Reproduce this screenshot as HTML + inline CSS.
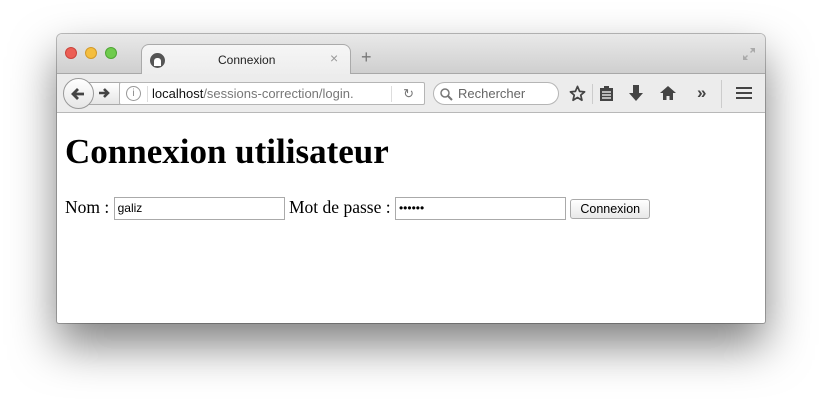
<!DOCTYPE html>
<html><head><meta charset="utf-8"><style>
*{margin:0;padding:0;box-sizing:border-box}
body{width:822px;height:402px;background:#fff;position:relative;overflow:hidden;font-family:"Liberation Sans",sans-serif}
.win{position:absolute;left:57px;top:34px;width:708px;height:289px;border-radius:5px 5px 2px 2px;box-shadow:0 22px 45px rgba(0,0,0,.5),0 0 0 1px rgba(0,0,0,.25);background:#fff;overflow:hidden}
.title{position:absolute;left:0;top:0;width:708px;height:40px;background:linear-gradient(#e9e9e9,#cfcfcf);border-bottom:1px solid #a8a8a8}
.dot{position:absolute;top:13px;width:12px;height:12px;border-radius:50%}
.tab{position:absolute;left:84px;top:10px;width:210px;height:31px;background:linear-gradient(#f6f6f6,#ededed);border:1px solid #aaa;border-bottom:none;border-radius:8px 8px 0 0}
.tool{position:absolute;left:0;top:40px;width:708px;height:39px;background:#ececec;border-bottom:1px solid #b8b8b8}
.url{position:absolute;left:62px;top:8px;width:306px;height:23px;background:#fff;border:1px solid #b5b5b5;border-radius:2px;font-size:13px;line-height:21px;padding-left:32px;color:#777}
.search{position:absolute;left:376px;top:8px;width:126px;height:23px;background:#fff;border:1px solid #b5b5b5;border-radius:12px;font-size:13px;line-height:21px;padding-left:24px;color:#666}
.ic{position:absolute;top:11px}
.content{position:absolute;left:0;top:80px;width:708px;font-family:"Liberation Serif",serif}
h1{position:absolute;left:8px;top:18px;font-size:35px;font-weight:bold;white-space:nowrap}
.form{position:absolute;left:8px;top:83px;font-size:17.5px;white-space:nowrap}
.in{display:inline-block;width:171px;height:23px;border:1px solid #aaa;vertical-align:middle;font-family:"Liberation Sans",sans-serif;font-size:12px;line-height:21px;padding-left:3px}
.btn{display:inline-block;height:20px;border:1px solid #aaa;border-radius:3px;background:linear-gradient(#fff,#e8e8e8);font-family:"Liberation Sans",sans-serif;font-size:12.5px;line-height:18px;padding:0 9px;vertical-align:middle;margin-left:0}
</style></head><body>
<div class="win">
 <div class="title">
  <div class="dot" style="left:8px;background:#ec5e55;border:1px solid #c9443c"></div>
  <div class="dot" style="left:28px;background:#f4be3f;border:1px solid #d29a2a"></div>
  <div class="dot" style="left:48px;background:#6fcb4d;border:1px solid #4fa535"></div>
  <div class="tab">
   <div style="position:absolute;left:8px;top:8px;width:15px;height:15px;border-radius:50%;background:#555"><div style="position:absolute;left:4px;top:5px;width:7px;height:8px;background:#fff;border-radius:3px 3px 0 0"></div></div>
   <div style="position:absolute;left:76px;top:8px;font-size:12px;color:#222">Connexion</div>
   <div style="position:absolute;left:188px;top:5px;font-size:14px;color:#999">×</div>
  </div>
  <div style="position:absolute;left:304px;top:14px;font-size:18px;color:#777;line-height:18px">+</div>
  <svg style="position:absolute;left:685px;top:13px" width="14" height="14" viewBox="0 0 14 14" fill="#aaa"><path d="M8 1h5v5l-2-2-2 2-1-1 2-2zM6 13H1V8l2 2 2-2 1 1-2 2z"/></svg>
 </div>
 <div class="tool">
  <div style="position:absolute;left:30px;top:8px;width:34px;height:23px;background:linear-gradient(#fff,#e6e6e6);border:1px solid #aaa"></div>
  <svg style="position:absolute;left:40px;top:12px" width="14" height="14" viewBox="0 0 14 14"><path d="M2 7h9M7 3l4 4-4 4" stroke="#444" stroke-width="2.6" fill="none"/></svg>
  <div style="position:absolute;left:6px;top:4px;width:31px;height:31px;border-radius:50%;background:linear-gradient(#fff,#e6e6e6);border:1px solid #999"></div>
  <svg style="position:absolute;left:13px;top:12px" width="16" height="16" viewBox="0 0 16 16"><path d="M14 8H3M8 3L3 8l5 5" stroke="#444" stroke-width="2.8" fill="none"/></svg>
  <div class="url"><span style="position:absolute;left:6px;top:3px;width:15px;height:15px;border:1px solid #999;border-radius:50%;font-size:10px;line-height:13px;text-align:center;color:#888">i</span><span style="position:absolute;left:27px;top:3px;height:16px;border-left:1px solid #ddd"></span><span style="color:#111">localhost</span>/sessions-correction/login.<span style="position:absolute;right:32px;top:3px;height:16px;border-left:1px solid #ddd"></span><span style="position:absolute;right:10px;top:0;color:#777">↻</span></div>
  <div class="search"><svg style="position:absolute;left:6px;top:5px" width="13" height="13" viewBox="0 0 13 13"><circle cx="5" cy="5" r="4" stroke="#777" stroke-width="1.5" fill="none"/><path d="M8 8l4 4" stroke="#777" stroke-width="2"/></svg>Rechercher</div>
  <svg class="ic" style="left:512px;top:11px" width="17" height="17" viewBox="0 0 24 24"><path d="M12 2l3 7 7 .6-5.4 4.7 1.7 7.2L12 17.6 5.7 21.5l1.7-7.2L2 9.6 9 9z" stroke="#444" stroke-width="2.4" fill="none" stroke-linejoin="round"/></svg>
  <div style="position:absolute;left:535px;top:10px;height:20px;border-left:1px solid #ccc"></div>
  <svg class="ic" style="left:542px" width="15" height="17" viewBox="0 0 15 17"><rect x="1" y="3" width="13" height="13" fill="#444"/><rect x="5" y="1" width="5" height="3" fill="#444"/><path d="M3 7h9M3 10h9M3 13h9" stroke="#fff" stroke-width="1.2"/></svg>
  <svg class="ic" style="left:572px" width="14" height="16" viewBox="0 0 14 16"><path d="M4 0h6v8h4l-7 8-7-8h4z" fill="#444"/></svg>
  <svg class="ic" style="left:603px" width="16" height="16" viewBox="0 0 16 16"><path d="M8 1l8 7h-3v7H9.5v-4h-3v4H3V8H0z" fill="#444"/></svg>
  <div class="ic" style="left:640px;top:9px;font-size:17px;font-weight:bold;color:#444">»</div>
  <div style="position:absolute;left:664px;top:6px;height:28px;border-left:1px solid #ccc"></div>
  <div style="position:absolute;left:679px;top:13px;width:16px;height:12px;border-top:2.5px solid #444;border-bottom:2.5px solid #444"><div style="margin-top:2.5px;height:2.5px;background:#444"></div></div>
 </div>
 <div class="content">
  <h1>Connexion utilisateur</h1>
  <div class="form">Nom : <span class="in">galiz</span> Mot de passe : <span class="in">••••••</span> <span class="btn">Connexion</span></div>
 </div>
</div>
</body></html>
